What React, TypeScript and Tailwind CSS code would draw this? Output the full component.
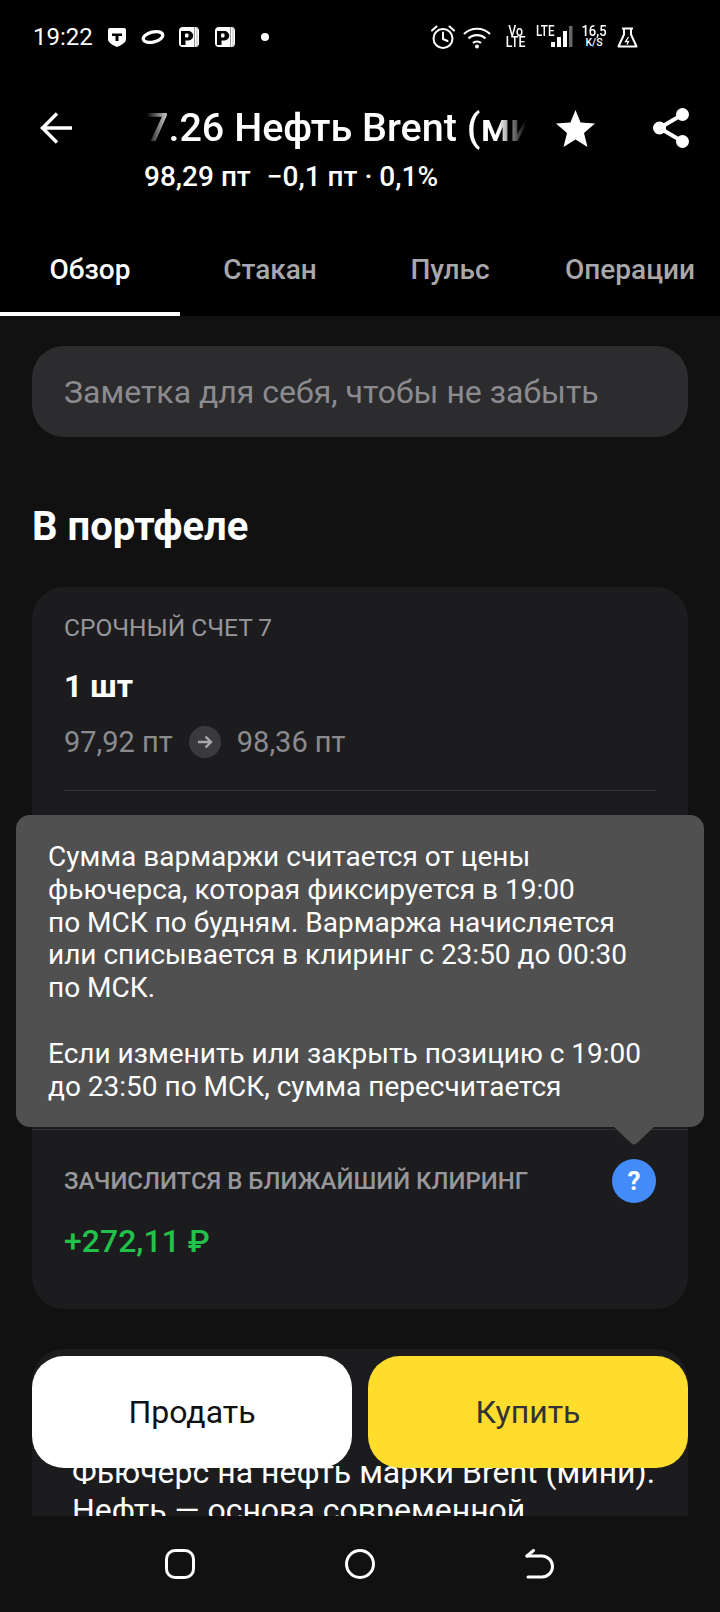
import React from "react";

const font = { fontFamily: "Roboto, 'Noto Sans', sans-serif" };

function PIcon({ cls }: { cls: string }) {
  return (
    <svg width="20" height="20" viewBox="0 0 20 20" className={cls}>
      <rect x="0" y="0" width="20" height="20" rx="4" fill="#fff" />
      <path d="M2 4h7.500a4.750 4.750 0 0 1 0 9.500H6.500V18H2z" fill="#000" />
      <rect x="6" y="6.500" width="3.500" height="4" rx="1" fill="#fff" />
      <rect x="15" y="0" width="1" height="20" fill="#999" />
      <rect x="17.500" y="0" width="1" height="20" fill="#bbb" />
    </svg>
  );
}

function StatusBar() {
  return (
    <div className="relative flex h-[72px] items-center justify-between pl-[33px] pr-[82px] pt-[2px] text-white">
      <div className="flex items-center">
        <span className="w-[74px] text-[24px] font-normal leading-[28px]">19:22</span>
        <svg width="20" height="20" viewBox="0 0 20 20" className="mr-[14px]">
          <path d="M1 3a2 2 0 0 1 2-2h14a2 2 0 0 1 2 2v9c0 4-5 6-9 8-4-2-9-4-9-8z" fill="#fff" />
          <path d="M5 6.500h10v2.500h-3.500V14h-3V9H5z" fill="#000" />
        </svg>
        <svg width="24" height="16" viewBox="0 0 24 16" className="mr-[14px]">
          <ellipse cx="12" cy="8" rx="10" ry="5" transform="rotate(-14 12 8)" fill="none" stroke="#fff" strokeWidth="3.200" />
        </svg>
        <PIcon cls="mr-[16px]" />
        <PIcon cls="mr-[26px]" />
        <span className="h-[8px] w-[8px] rounded-full bg-white" />
      </div>
      <div className="flex items-center">
        <svg width="24" height="24" viewBox="0 0 24 24" className="mr-[8px]" fill="none" stroke="#fff" strokeWidth="2">
          <circle cx="12" cy="13.500" r="9.500" />
          <path d="M12 7.500v6.500l4.500 2" strokeLinecap="round" strokeLinejoin="round" />
          <path d="M1 5.500 5.500 1.500M23 5.500 18.500 1.500" strokeLinecap="round" />
        </svg>
        <svg width="28" height="23" viewBox="0 0 28 23" className="mr-[15px]" fill="none" stroke="#fff" strokeWidth="2.200">
          <path d="M1 8c7-7 19-7 26 0" />
          <path d="M5.500 12.500c4.500-4.500 12.500-4.500 17 0" />
          <path d="M10 17c2.200-2 5.800-2 8 0" />
          <circle cx="14" cy="20.500" r="2" fill="#fff" stroke="none" />
        </svg>
        <div className="mr-[10px] flex w-[20px] flex-col items-center text-[14.500px] font-medium leading-[11px]">
          <span className="scale-x-[0.85]">Vo</span>
          <span className="scale-x-[0.85]">LTE</span>
        </div>
        <div className="relative mr-[8px] h-[24px] w-[36px]">
          <span className="absolute left-0 top-[1px] origin-left scale-x-[0.8] text-[14.500px] font-medium leading-[12px]">LTE</span>
          <svg width="22" height="21" viewBox="0 0 22 21" className="absolute left-[15px] top-[1px]">
            <rect x="0" y="16" width="4" height="5" fill="#fff" />
            <rect x="6" y="11" width="4" height="10" fill="#fff" />
            <rect x="12" y="5" width="4" height="16" fill="#fff" />
            <rect x="18" y="0" width="3.500" height="21" fill="#666" />
          </svg>
        </div>
        <div className="mr-[9px] flex w-[28px] flex-col items-center font-medium">
          <span className="scale-x-[0.9] text-[14.500px] leading-[12px]">16,5</span>
          <span className="text-[10.500px] leading-[10px]">K/S</span>
        </div>
        <svg width="21" height="21" viewBox="0 0 21 21" fill="none" stroke="#fff" strokeWidth="2">
          <path d="M5 1.500h11M7 1.500v6L1.500 19.500h18L14 7.500v-6" strokeLinejoin="round" />
          <path d="m11.500 10-3 4.500h3l-1.500 3" strokeWidth="1.300" />
        </svg>
      </div>
    </div>
  );
}

function Header() {
  return (
    <div className="flex h-[144px] items-start pl-[40px]">
      <svg width="33" height="32" viewBox="0 0 33 32" className="mt-[40px] shrink-0" fill="none" stroke="#fff" strokeWidth="3.400">
        <path d="M32 16H3M17 1.500 2.500 16 17 30.500" />
      </svg>
      <div className="ml-[73px] w-[384px] shrink-0">
        <div className="overflow-hidden whitespace-nowrap pt-[34px] text-[39.500px] font-medium leading-[44px] text-white [mask-image:linear-gradient(to_right,transparent_0,black_26px,black_352px,transparent_380px)]">
          7.26 Нефть Brent (мини)
        </div>
        <div className="-ml-[2px] mt-[12px] flex whitespace-pre text-[28px] font-medium leading-[30px] text-white">
          <span>98,29 пт</span>
          <span className="ml-[16px]">−0,1 пт · 0,1%</span>
        </div>
      </div>
      <svg width="39" height="37" viewBox="0 0 39 37" className="ml-[26px] mt-[38px] shrink-0">
        <path d="M19.500 0 24.600 12.600 39 13.600 28 23 31.500 37 19.500 29.500 7.500 37 11 23 0 13.600 14.400 12.600z" fill="#fff" />
      </svg>
      <svg width="36" height="40" viewBox="0 0 36 40" className="ml-[58px] mt-[36px] shrink-0">
        <path d="M29.500 6.500 6.500 20l23 13.500" fill="none" stroke="#fff" strokeWidth="4" />
        <circle cx="29.500" cy="6.500" r="6.500" fill="#fff" />
        <circle cx="6.500" cy="20" r="6.500" fill="#fff" />
        <circle cx="29.500" cy="33.500" r="6.500" fill="#fff" />
      </svg>
    </div>
  );
}

function Tabs() {
  const tabs = ["Обзор", "Стакан", "Пульс", "Операции"];
  return (
    <div className="grid h-[100px] grid-cols-4">
      {tabs.map((t, i) => (
        <div
          key={t}
          className={
            i === 0
              ? "flex items-start justify-center border-b-4 border-white pt-[38px] text-[28px] font-medium leading-[32px] text-white"
              : "flex items-start justify-center pt-[38px] text-[28px] font-medium leading-[32px] text-[#a8a8ac]"
          }
        >
          {t}
        </div>
      ))}
    </div>
  );
}

function Actions() {
  return (
    <div className="absolute left-[32px] right-[32px] top-[1040px] flex gap-4">
      <div className="flex h-[112px] flex-1 items-center justify-center rounded-[32px] bg-white text-[32px] leading-[36px] text-[#111]">Продать</div>
      <div className="flex h-[112px] flex-1 items-center justify-center rounded-[32px] bg-[#ffdd2d] text-[32px] leading-[36px] text-[#333]">Купить</div>
    </div>
  );
}

function Tooltip() {
  return (
    <div className="absolute left-4 right-4 top-[499px] rounded-[14px] bg-[#505050] px-8 pb-[24px] pt-[26px] text-[28px] leading-[32.800px] text-white">
      <p>Сумма вармаржи считается от цены</p>
      <p>фьючерса, которая фиксируется в 19:00</p>
      <p>по МСК по будням. Вармаржа начисляется</p>
      <p>или списывается в клиринг с 23:50 до 00:30</p>
      <p>по МСК.</p>
      <p className="mt-[32.800px]">Если изменить или закрыть позицию с 19:00</p>
      <p>до 23:50 по МСК, сумма пересчитается</p>
      <svg width="40" height="18" viewBox="0 0 40 18" className="absolute right-[50px] top-full">
        <path d="M0 0h40L22.500 16.500q-2.500 2-5 0z" fill="#505050" />
      </svg>
    </div>
  );
}

export default function App() {
  return (
    <div className="flex h-[1612px] w-[720px] flex-col overflow-hidden bg-black" style={font}>
      <StatusBar />
      <Header />
      <Tabs />
      <div className="relative flex-1 overflow-hidden bg-[#111112] px-8 pt-[30px]">
        <div className="flex h-[91px] items-center rounded-[32px] bg-[#2c2c2e] px-8 text-[32px] leading-[36px] text-[#8b8b8f]">
          Заметка для себя, чтобы не забыть
        </div>
        <h2 className="mt-[68px] text-[40px] font-bold leading-[44px] text-white">В портфеле</h2>
        <div className="mt-[38px] h-[722px] rounded-[32px] bg-[#1c1c1e]">
          <div className="mx-8 flex h-[204px] flex-col border-b border-[#333336] pt-[27px]">
            <div className="text-[24.500px] leading-[28px] text-[#97979c]">СРОЧНЫЙ СЧЕТ 7</div>
            <div className="mt-[26px] text-[32px] font-bold leading-[36px] text-white">1 шт</div>
            <div className="mt-[21px] flex items-center text-[29px] leading-[34px] text-[#8b8b8f]">
              <span>97,92 пт</span>
              <span className="mx-[16px] flex h-8 w-8 items-center justify-center rounded-full bg-[#3a3a3c]">
                <svg width="16" height="16" viewBox="0 0 16 16" fill="none" stroke="#a8a8ac" strokeWidth="2.400">
                  <path d="M1 8h13M8.500 2.500 14 8l-5.500 5.500" />
                </svg>
              </span>
              <span>98,36 пт</span>
            </div>
          </div>
          <div className="h-[339px] border-b border-[#333336]" />
          <div className="mx-8 mt-[29px] flex items-center justify-between">
            <span className="text-[24px] font-medium leading-[28px] text-[#97979c]">ЗАЧИСЛИТСЯ В БЛИЖАЙШИЙ КЛИРИНГ</span>
            <span className="flex h-[44px] w-[44px] items-center justify-center rounded-full bg-[#428bf9] text-[26px] font-bold text-white">?</span>
          </div>
          <div className="mx-8 mt-[19px] text-[32px] font-medium leading-[38px] text-[#22c24a]">+272,11 ₽</div>
        </div>
        <div className="mt-[40px] h-[300px] whitespace-nowrap rounded-t-[32px] bg-[#1c1c1e] px-[40px] pt-[104px] text-[32px] leading-[38px] text-white">
          <p>Фьючерс на нефть марки Brent (мини).</p>
          <p>Нефть — основа современной</p>
        </div>
        <Tooltip />
        <Actions />
      </div>
      <div className="flex h-[96px] items-start justify-center bg-[#111112] pt-[33px]">
        <div className="flex w-[180px] justify-center">
          <span className="h-[30px] w-[30px] rounded-[10px] border-[3px] border-white" />
        </div>
        <div className="flex w-[180px] justify-center">
          <span className="h-[30px] w-[30px] rounded-full border-[3px] border-white" />
        </div>
        <div className="flex w-[180px] justify-center">
          <svg width="30" height="30" viewBox="0 0 30 30" fill="none" stroke="#fff" strokeWidth="3" strokeLinecap="round">
            <path d="M2 7H17a10.500 10.500 0 0 1 0 21H3" />
            <path d="M8.500 1.500 2 7" />
          </svg>
        </div>
      </div>
    </div>
  );
}
